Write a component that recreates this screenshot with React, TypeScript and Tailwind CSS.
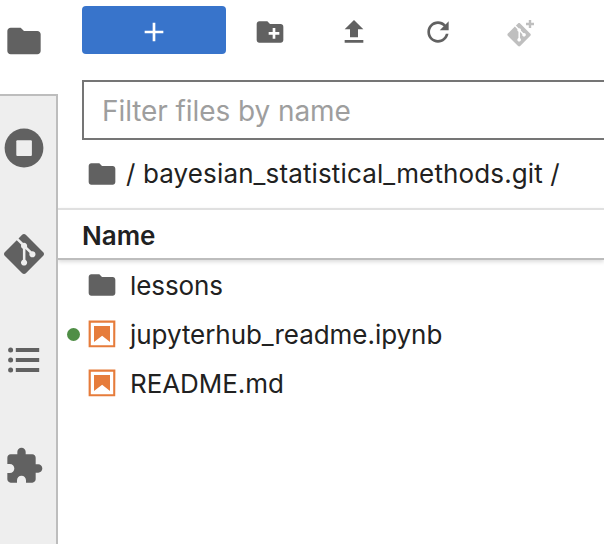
import type { ReactNode } from "react";

const FOLDER =
  "M10 4H4c-1.1 0-1.99.9-1.99 2L2 18c0 1.1.9 2 2 2h16c1.1 0 2-.9 2-2V8c0-1.1-.9-2-2-2h-8l-2-2z";
const NEW_FOLDER =
  "M20 6h-8l-2-2H4c-1.11 0-1.99.89-1.99 2L2 18c0 1.11.89 2 2 2h16c1.11 0 2-.89 2-2V8c0-1.11-.89-2-2-2zm-1 8h-3v3h-2v-3h-3v-2h3V9h2v3h3v2z";
const GIT =
  "M23.546 10.93L13.067.452c-.604-.603-1.582-.603-2.188 0L8.708 2.627l2.76 2.76c.645-.215 1.379-.07 1.889.441.516.515.658 1.258.438 1.9l2.658 2.66c.645-.223 1.387-.078 1.9.435.721.72.721 1.884 0 2.604-.719.719-1.881.719-2.6 0-.539-.541-.674-1.337-.404-1.996L12.86 8.955v6.525c.176.086.342.203.488.348.713.721.713 1.883 0 2.6-.719.721-1.889.721-2.609 0-.719-.719-.719-1.879 0-2.598.182-.18.387-.316.605-.406V8.835c-.217-.091-.424-.222-.6-.401-.545-.545-.676-1.342-.396-2.009L7.636 3.7.45 10.881c-.6.605-.6 1.584 0 2.189l10.48 10.477c.604.604 1.582.604 2.186 0l10.43-10.43c.605-.603.605-1.582 0-2.187";
const UPLOAD = "M5 20h14v-2H5v2zM9 16h6v-6h4l-7-7-7 7h4z";
const REFRESH =
  "M9 13.5c-2.49 0-4.5-2.01-4.5-4.5S6.51 4.5 9 4.5c1.24 0 2.36.52 3.17 1.33L10 8h5V3l-1.76 1.76C12.15 3.68 10.66 3 9 3 5.69 3 3.01 5.69 3.01 9S5.69 15 9 15c2.97 0 5.43-2.16 5.9-5h-1.52c-.46 2-2.24 3.5-4.38 3.5z";
const PUZZLE =
  "M20.5 11H19V7c0-1.1-.9-2-2-2h-4V3.5C13 2.12 11.88 1 10.5 1S8 2.12 8 3.5V5H4c-1.1 0-1.99.9-1.99 2v3.8H3.5c1.49 0 2.7 1.21 2.7 2.7s-1.21 2.7-2.7 2.7H2V20c0 1.1.9 2 2 2h3.8v-1.5c0-1.49 1.21-2.7 2.7-2.7 1.49 0 2.7 1.21 2.7 2.7V22H17c1.1 0 2-.9 2-2v-4h1.5c1.38 0 2.5-1.12 2.5-2.5S21.88 11 20.5 11z";

function Icon({ d, box = 24, className = "size-8" }: { d: string; box?: number; className?: string }) {
  return (
    <svg viewBox={`0 0 ${box} ${box}`} className={`shrink-0 fill-[#616161] ${className}`}>
      <path d={d} />
    </svg>
  );
}

function NotebookIcon() {
  return (
    <svg viewBox="0 0 22 22" className="mb-px size-8 shrink-0 fill-[#e67c3b]">
      <path d="M18.7 3.3v15.4H3.3V3.3h15.4m1.5-1.5H1.8v18.3h18.3l.1-18.3z" />
      <path d="M16.5 16.5l-5.4-4.3-5.6 4.3v-11h11z" />
    </svg>
  );
}

function SideTab({ children }: { children: ReactNode }) {
  return <button className="flex h-[106px] w-12 shrink-0 items-center justify-center">{children}</button>;
}

function Sidebar() {
  return (
    <nav className="flex w-[58px] shrink-0 flex-col">
      <div className="flex h-[94px] w-12 shrink-0 items-center justify-center pb-3">
        <Icon d={FOLDER} className="size-10" />
      </div>
      <div className="flex flex-1 flex-col border-t-2 border-r-2 border-[#bdbdbd] bg-[#eeeeee]">
        <div className="-mt-px flex flex-col">
          <SideTab>
            <svg viewBox="0 0 40 40" className="size-10">
              <circle cx="20" cy="20" r="19.4" className="fill-[#616161]" />
              <rect x="12.3" y="12.3" width="15.6" height="15.6" rx="1" className="fill-[#eeeeee]" />
            </svg>
          </SideTab>
          <SideTab>
            <Icon d={GIT} className="size-10" />
          </SideTab>
          <SideTab>
            <svg viewBox="0 0 40 40" className="size-10 fill-[#616161]">
              <circle cx="6.6" cy="10" r="2.5" />
              <circle cx="6.6" cy="20" r="2.5" />
              <circle cx="6.6" cy="30" r="2.5" />
              <path d="M11.8 8h23.4v4H11.8zM11.8 18h23.4v4H11.8zM11.8 28h23.4v4H11.8z" />
            </svg>
          </SideTab>
          <SideTab>
            <Icon d={PUZZLE} className="size-10" />
          </SideTab>
        </div>
      </div>
    </nav>
  );
}

function Toolbar() {
  return (
    <div className="flex h-[54px] shrink-0 items-start pt-1.5 pl-6">
      <button className="flex h-12 w-36 items-center justify-center rounded-[4px] bg-[#3874cb] pt-1">
        <svg viewBox="0 0 24 24" className="size-8 fill-white">
          <path d="M19 13h-6v6h-2v-6H5v-2h6V5h2v6h6v2z" />
        </svg>
      </button>
      <div className="ml-7 flex h-[52px] items-center gap-13">
        <Icon d={NEW_FOLDER} />
        <Icon d={UPLOAD} />
        <Icon d={REFRESH} box={18} />
        <svg viewBox="0 0 32 32" className="size-8 fill-[#bfbfbf]">
          <g transform="translate(1.4 7) scale(.975)">
            <path d={GIT} />
          </g>
          <path d="M22.8 4h2.4v2.8H28v2.4h-2.8V12h-2.4V9.2H20V6.8h2.8z" />
        </svg>
      </div>
    </div>
  );
}

export default function App() {
  return (
    <div className="flex h-[544px] w-[604px] overflow-hidden bg-white font-['Inter',sans-serif] text-[26px] leading-[30px] text-[#212121]">
      <Sidebar />
      <main className="flex min-w-0 flex-1 flex-col overflow-hidden">
        <Toolbar />
        <div className="mt-[26px] -mr-2 ml-6 flex h-[60px] shrink-0 items-center border-2 border-[#757575] pt-0.5 pl-[18px] text-[28px] text-[#9e9e9e]">
          <span className="tracking-[-0.08px]">Filter files by name</span>
        </div>
        <div className="flex h-[68px] shrink-0 items-center pl-7">
          <Icon d={FOLDER} />
          <span className="ml-2 whitespace-pre tracking-[0.13px]">/ bayesian_statistical_methods.git /</span>
        </div>
        <div className="flex h-[52px] shrink-0 items-center border-t-2 border-b-2 border-t-[#e0e0e0] border-b-[#bdbdbd] pt-1 pl-6 font-semibold shadow-[0_2px_4px_rgba(0,0,0,0.14)]">
          <span className="tracking-[0px]">Name</span>
        </div>
        <ul className="flex flex-col">
          <li className="flex h-[50px] items-center pl-7">
            <Icon d={FOLDER} />
            <span className="ml-3 pt-0.5 tracking-[-0.1px]">lessons</span>
          </li>
          <li className="flex h-[49px] items-center pl-[9px]">
            <span className="mr-1.5 size-[13px] rounded-full bg-[#4f8e46]" />
            <NotebookIcon />
            <span className="ml-3 tracking-[-0.05px]">jupyterhub_readme.ipynb</span>
          </li>
          <li className="flex h-[49px] items-center pl-7">
            <NotebookIcon />
            <span className="ml-3 tracking-[-0.07px]">README.md</span>
          </li>
        </ul>
      </main>
    </div>
  );
}
